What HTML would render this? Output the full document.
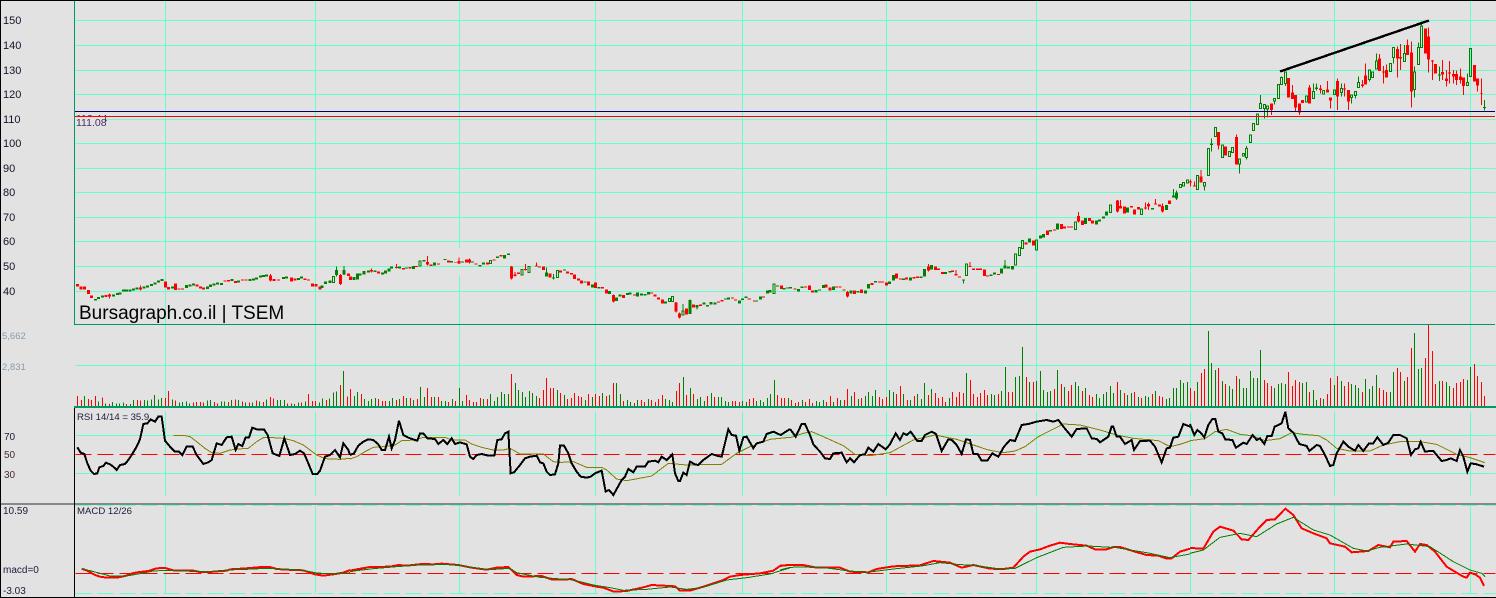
<!DOCTYPE html>
<html><head><meta charset="utf-8"><title>Bursagraph.co.il | TSEM</title>
<style>
html,body{margin:0;padding:0;background:#e2e2e2;width:1496px;height:598px;overflow:hidden}
svg{display:block}
text{font-family:"Liberation Sans",sans-serif;font-size:10px;fill:#1c1c3c}
.p text{font-size:11px;fill:#14142c}
path,polyline{fill:none}
</style></head><body>
<svg width="1496" height="598" viewBox="0 0 1496 598" shape-rendering="crispEdges" xmlns="http://www.w3.org/2000/svg">
<rect width="1496" height="598" fill="#e2e2e2"/>
<!-- grid -->
<g transform="translate(.5 .5)">
<path stroke="#66ffcc" d="M165 0V324M315 0V324M459 0V248M459 275V324M595 0V324M742 0V324M886 0V324M1036 0V324M1190 0V324M1334 0V324M1470 0V324M75 20H1495M75 45H1495M75 70H1495M75 94H1495M75 119H1495M75 143H1495M75 168H1495M75 192H1495M75 217H1495M75 241H1495M75 266H1495M75 291H1495"/>
<path stroke="#66ffcc" d="M165 325V406M315 325V406M459 325V406M595 325V406M742 325V406M886 325V406M1036 325V406M1190 325V406M1334 325V406M1470 325V406M75 365H1495"/>
<path stroke="#66ffcc" d="M165 411V495M315 411V495M459 411V495M595 411V495M742 411V495M886 411V495M1036 411V495M1190 411V495M1334 411V495M1470 411V495M75 435H1495M75 473H1495"/>
<path stroke="#66ffcc" d="M165 505V593M315 505V593M459 505V593M595 505V593M742 505V593M886 505V593M1036 505V593M1190 505V593M1334 505V593M1470 505V593"/>
<path stroke="#66ffcc" stroke-dasharray="16 6" d="M75 505H1495M75 593H1495"/>
<path stroke="#ff0000" stroke-dasharray="16 6" d="M75 454H1495M75 573H1495"/>
</g>
<!-- labels -->
<g class="p"><text x="3" y="24">150</text><text x="3" y="49">140</text><text x="3" y="74">130</text><text x="3" y="98">120</text><text x="3" y="123">110</text><text x="3" y="147">100</text><text x="3" y="172">90</text><text x="3" y="196">80</text><text x="3" y="221">70</text><text x="3" y="245">60</text><text x="3" y="270">50</text><text x="3" y="295">40</text></g>
<text x="76" y="122" style="font-size:10.5px;fill:#443355">112.44</text>
<rect x="75" y="117" width="30" height="11" fill="#e2e2e2"/>
<text x="76" y="126" style="font-size:10.5px;fill:#443366">111.08</text>
<text x="2" y="339" style="font-size:9.5px;fill:#8a9bab">5,662</text>
<text x="2" y="370" style="font-size:9.5px;fill:#8a9bab">2,831</text>
<text x="79" y="319" style="font-size:19px;fill:#000">Bursagraph.co.il | TSEM</text>
<text x="77" y="420" style="font-size:9.6px">RSI 14/14 = 35.9</text>
<text x="4" y="440">70</text><text x="4" y="458" style="fill:#4a2a3a">50</text><text x="4" y="478" style="fill:#4a2a3a">30</text>
<text x="77" y="514" style="font-size:9.6px">MACD 12/26</text>
<text x="3" y="514">10.59</text><text x="3" y="573">macd=0</text><text x="3" y="594">-3.03</text>

<!-- candles zone A -->
<g transform="translate(0 270) scale(.333333)">
<path stroke="#ff0000" stroke-width="9" d="M232 42V50M243 50V58M253 50V58M265 60V72M275 76V84M318 75V81M329 74V80M421 53V59M497 34V52M506 51V59M527 40V60M537 55V59M548 55V59M591 44V50M601 49V55M611 53V59M675 31V35M686 30V34M707 33V39M728 28V32M738 28V32M811 16V32M822 27V33M835 28V32M875 22V35M885 25V31M915 26V30M925 28V32M938 41V49M948 42V50M960 50V58M1022 15V42M1045 10V18"/>
<path stroke="#008000" stroke-width="9" d="M286 87V92M296 81V87M307 76V82M340 73V79M352 69V75M360 67V73M370 59V65M380 59V65M390 59V65M400 55V61M411 53V59M432 49V55M443 47V53M454 42V48M465 37V43M476 32V38M486 27V33M517 50V56M559 45V54M570 43V49M580 41V47M622 50V57M632 44V51M642 40V46M653 37V43M664 39V45M696 27V33M716 31V37M750 27V33M760 25V31M770 22V28M781 17V23M791 15V21M800 14V20M850 21V27M860 19V25M895 24V30M905 20V26M966 46V54M977 34V42M990 31V39"/>
<path stroke="#008000" stroke-width="3" fill="none" d="M998 20h6V38h-6zM1007 2h6V14h-6zM1029 2h6V12h-6z"/>
<path stroke="#ff0000" stroke-width="3" d="M421 46V62M329 70V85M811 12V34M1022 12V45"/>
<path stroke="#008000" stroke-width="3" d="M1010 -10V20M1032 -12V15"/>
</g>
<!-- candles zone B -->
<g transform="translate(350 230) scale(.333333)">
<path stroke="#ff0000" stroke-width="9" d="M2 140V150M65 120V124M85 125V130M140 111V114M160 114V118M180 111V116M200 108V111M232 96V103M243 104V108M265 100V104M295 91V97M316 96V98M327 93V100M350 88V98M358 88V98M378 101V104M412 98V104M432 88V92M453 75V79M484 110V145M495 134V138M505 128V132M526 117V120M560 106V110M568 110V113M580 110V120M600 131V142M631 121V128M653 125V131M664 129V134M674 133V147M685 145V152M695 152V161M715 155V167M736 158V174M757 171V175M769 178V191M790 195V214M820 195V204M853 193V197M905 187V190M915 193V200M925 202V208M937 208V220M978 218V245M989 250V262M1009 235V253M1030 224V232M1051 224V228M1105 214V218M1116 210V214M1147 202V205M1157 208V212M1197 205V208"/>
<path stroke="#008000" stroke-width="9" d="M12 141V150M22 130V148M30 131V137M42 123V133M55 122V127M75 122V126M97 127V133M107 122V130M117 115V125M125 110V116M148 110V116M170 113V116M190 108V117M222 90V94M253 98V107M285 87V90M305 93V97M337 94V98M367 95V98M390 105V109M400 98V103M442 80V84M463 75V85M475 71V75M590 128V140M611 142V146M643 118V122M705 154V158M727 163V172M747 171V175M778 183V192M800 203V213M810 193V200M832 189V195M840 188V193M862 187V200M875 191V196M885 192V196M895 186V194M947 214V220M1041 225V232M1062 218V224M1072 225V230M1083 216V223M1095 217V223M1127 205V209M1136 203V208M1168 212V220M1178 206V210M1188 200V204"/>
<path stroke="#008000" stroke-width="3" d="M207 93h6V108h-6zM418 92h6V100h-6zM513 118h6V135h-6zM534 110h6V127h-6zM619 121h6V142h-6zM955 205h6V214h-6zM965 200h6V215h-6zM996 243h6V255h-6zM1017 212h6V250h-6z"/>
<path stroke="#ff0000" stroke-width="3" d="M232 78V106M327 82V102M526 102V122M484 108V148M495 126V140M65 116V128M140 102V116M560 98V110M358 86V100M978 216V248M989 248V265M790 193V218"/>
<path stroke="#008000" stroke-width="3" d="M590 113V130M1020 209V252M1041 232V238M999 222V245M611 132V148"/>
</g>
<!-- candles zone C -->
<g transform="translate(740 170) scale(.333333)">
<path stroke="#ff0000" stroke-width="9" d="M28 385V388M43 392V395M70 379V383M124 347V357M165 355V358M196 349V352M208 347V360M217 362V368M258 344V353M270 353V362M290 350V353M300 350V353M312 358V361M322 366V379M343 362V372M364 358V369M396 339V345M418 334V338M428 335V338M440 338V347M469 310V326M481 326V329M500 322V328M522 321V325M532 320V324M565 290V302M586 290V300M595 296V300M607 306V312M637 301V306M648 312V316M658 320V323M690 288V291M700 296V300M712 296V300M722 296V300M733 298V318M743 316V320M775 312V315M858 218V224M880 212V226M922 182V195M943 178V182M964 162V177M973 170V175M985 170V173M994 170V173M1016 138V155M1027 152V165M1048 144V153M1057 152V160M1132 92V125M1141 108V116M1153 110V130M1174 108V112M1183 118V134M1195 111V119M1217 112V115M1225 102V110M1246 101V104M1258 103V110M1268 108V124M1288 92V102"/>
<path stroke="#008000" stroke-width="9" d="M50 391V395M62 380V388M82 361V370M90 360V367M112 346V350M132 354V358M142 352V356M152 351V355M175 357V364M186 350V354M228 360V367M238 358V362M250 345V354M280 350V360M333 362V370M354 363V367M376 361V370M385 342V356M406 333V337M448 335V342M460 315V331M490 326V330M511 322V331M543 320V324M553 297V320M574 285V298M617 306V312M630 303V308M670 328V332M753 313V318M763 307V314M785 295V310M795 287V295M806 290V296M817 288V298M868 206V218M901 197V205M910 192V202M932 180V185M953 160V178M1036 144V162M1069 151V163M1079 148V155M1090 139V145M1100 124V136M1162 112V128M1237 114V118M1279 105V120M1300 76V82M1310 68V85"/>
<path stroke="#008000" stroke-width="3" d="M99 342h6V370h-6zM677 282h6V317h-6zM824 252h6V285h-6zM835 232h6V257h-6zM845 212h6V235h-6zM886 210h6V240h-6zM1003 156h6V178h-6zM1108 105h6V128h-6zM1202 117h6V134h-6z"/>
<path stroke="#ff0000" stroke-width="3" d="M322 363V382M565 282V305M690 276V291M648 300V316M1016 126V158M1132 90V128M1141 90V112M1217 97V118M1246 87V104M1268 100V128M1225 98V120"/>
<path stroke="#008000" stroke-width="3" d="M795 270V295M670 330V340M1300 57V82M1310 62V90"/>
</g>
<!-- candles zone D -->
<g transform="translate(1180.1667 0) scale(.333333)">
<path stroke="#ff0000" stroke-width="9" d="M31 544V548M43 557V560M63 530V548M115 396V437M136 440V466M169 411V494M274 310V330M325 234V292M337 277V297M346 285V323M358 310V337M367 300V309M388 262V310M421 266V270M442 268V278M451 293V302M472 243V290M493 266V269M505 270V305M547 254V258M556 226V254M598 175V213M610 214V218M619 210V233M652 147V176M661 171V175M682 135V165M694 157V275M736 85V160M745 110V178M757 182V185M766 192V220M787 216V224M799 235V243M808 218V220M820 222V230M829 222V240M841 230V240M850 232V258M883 195V245M892 236V256M904 279V281"/>
<path stroke="#ff0000" stroke-width="3" d="M31 538V560M43 545V560M63 510V530M115 396V449M169 403V494M274 330V345M325 234V292M337 255V297M346 285V333M358 337V345M388 255V310M421 255V280M442 243V278M451 302V325M472 235V330M493 250V290M505 305V330M547 240V262M556 190V226M598 162V213M610 198V250M619 193V233M652 140V233M661 132V210M682 118V135M694 125V323M745 83V218M757 180V240M787 180V240M799 210V260M808 183V250M820 210V250M829 212V255M841 205V250M850 258V285M892 256V275M904 235V315"/>
<path stroke="#008000" stroke-width="3" d="M-2 553h6V562h-6zM7 548h6V558h-6zM19 540h6V549h-6zM49 527h6V568h-6zM70 548h6V558h-6zM82 445h6V526h-6zM103 382h6V410h-6zM124 435h6V472h-6zM145 455h6V470h-6zM154 442h6V458h-6zM175 477h6V492h-6zM187 460h6V468h-6zM196 445h6V472h-6zM208 405h6V427h-6zM217 370h6V392h-6zM229 342h6V373h-6zM238 310h6V325h-6zM250 314h6V325h-6zM259 318h6V327h-6zM280 295h6V303h-6zM292 253h6V295h-6zM301 233h6V253h-6zM313 216h6V250h-6zM376 288h6V306h-6zM397 274h6V296h-6zM427 272h6V282h-6zM460 270h6V284h-6zM481 265h6V277h-6zM511 285h6V293h-6zM523 275h6V287h-6zM532 247h6V263h-6zM565 210h6V238h-6zM574 216h6V232h-6zM586 183h6V207h-6zM628 190h6V215h-6zM637 143h6V173h-6zM670 160h6V185h-6zM700 216h6V268h-6zM712 142h6V193h-6zM721 78h6V142h-6zM859 247h6V256h-6zM868 145h6V230h-6z"/>
<path stroke="#008000" stroke-width="3" d="M73 558V572M94 415V455M241 285V310M253 325V355M262 327V352M178 492V520M199 438V445M199 472V478M241 325V327M283 303V313M304 233V230M316 250V258M400 250V274M409 250V272M409 264V268M484 250V265M484 277V290M514 293V310M526 287V295M535 230V247M568 238V245M589 160V183M640 173V190M673 135V160M703 200V216M703 268V293M715 128V142M724 65V78M778 200V243M862 220V247M862 256V258M913 300V332M908 323H918"/>
<path stroke="#008000" stroke-width="9" d="M94 431V435M409 263V267M778 224V227"/>
</g>
<!-- trend line -->
<path stroke="#000" stroke-width="2.4" d="M1280 71.5L1429 20.5"/>
<!-- support lines -->
<path stroke="#000060" d="M75 111.5H1495"/>
<path stroke="#ff0000" d="M75 116.5H1495"/>

<!-- volume -->
<g transform="translate(.1667 270) scale(.333333)">
<path stroke="#ff0000" stroke-width="3" d="M232 378V410M244 390V410M265 387V410M274 390V410M286 378V410M307 383V410M328 402V410M379 402V410M412 390V410M421 392V410M496 384V410M505 363V410M526 392V410M580 398V410M589 396V410M601 396V410M610 398V410M643 396V410M652 400V410M685 396V410M706 388V410M727 395V410M748 398V410M769 392V410M790 396V410M811 381V410M820 385V410M862 400V410M874 400V410M904 398V410M925 372V410M937 393V410M946 393V410M979 390V410M1021 345V410M1042 380V410"/>
<path stroke="#008000" stroke-width="3" d="M253 378V410M295 395V410M316 400V410M337 396V410M349 400V410M358 400V410M370 397V410M391 402V410M400 390V410M433 390V410M442 392V410M454 388V410M463 375V410M475 388V410M484 384V410M517 388V410M538 398V410M547 396V410M559 395V410M568 400V410M622 392V410M631 390V410M664 395V410M673 394V410M694 390V410M715 390V410M736 398V410M757 398V410M778 394V410M799 388V410M832 390V410M841 390V410M853 390V410M883 402V410M895 397V410M916 395V410M958 397V410M967 385V410M988 386V410M1000 367V410M1009 364V410M1030 303V410"/>
</g>
<g transform="translate(340.1667 325) scale(.333333)">
<path stroke="#ff0000" stroke-width="3" d="M31 192V245M64 207V245M115 222V245M127 228V245M136 228V245M169 225V245M190 213V245M211 219V245M232 222V245M262 189V245M274 216V245M295 216V245M325 231V245M346 228V245M379 210V245M388 225V245M400 231V245M409 231V245M421 219V245M442 222V245M514 147V245M598 219V245M610 195V245M619 159V245M631 189V245M640 189V245M661 204V245M682 222V245M694 219V245M703 204V245M715 213V245M724 216V245M745 207V245M766 207V245M778 213V245M799 213V245M820 174V245M850 228V245M883 234V245M904 225V245M913 231V245M934 225V245M946 231V245M955 222V245M967 210V245M1009 198V245M1018 174V245M1039 210V245M1060 207V245M1102 213V245M1123 216V245M1177 228V245M1186 228V245M1198 231V245M1228 222V245M1240 219V245M1312 210V245M1324 219V245M1333 219V245"/>
<path stroke="#008000" stroke-width="3" d="M43 213V245M52 201V245M73 222V245M85 228V245M94 222V245M106 219V245M148 228V245M157 219V245M178 222V245M199 219V245M220 225V245M241 186V245M253 216V245M283 216V245M304 228V245M316 228V245M337 222V245M358 189V245M367 228V245M430 222V245M451 207V245M463 228V245M472 216V245M484 201V245M493 207V245M505 207V245M526 174V245M535 195V245M547 201V245M556 216V245M568 198V245M577 204V245M589 213V245M652 195V245M673 210V245M736 225V245M757 216V245M787 204V245M808 210V245M829 174V245M841 207V245M862 225V245M871 231V245M892 225V245M925 222V245M976 222V245M988 225V245M997 231V245M1030 156V245M1051 189V245M1072 222V245M1081 216V245M1093 228V245M1114 204V245M1135 216V245M1144 216V245M1156 228V245M1165 231V245M1207 228V245M1219 231V245M1249 228V245M1261 225V245M1270 231V245M1282 219V245M1291 207V245M1303 165V245M1345 219V245"/>
</g>
<g transform="translate(780.1667 325) scale(.333333)">
<path stroke="#ff0000" stroke-width="3" d="M34 225V245M46 234V245M55 231V245M76 231V245M88 222V245M97 234V245M139 231V245M151 213V245M172 219V245M193 225V245M202 192V245M223 201V245M244 219V245M298 216V245M307 222V245M319 216V245M349 207V245M361 183V245M382 225V245M403 213V245M445 210V245M466 204V245M475 219V245M487 216V245M496 231V245M517 201V245M529 216V245M538 201V245M550 204V245M571 165V245M580 207V245M592 216V245M601 204V245M613 195V245M622 210V245M655 207V245M685 201V245M697 201V245M739 156V245M760 171V245M823 192V245M844 177V245M865 198V245M874 180V245M907 198V245M928 210V245M937 216V245M1012 171V245M1033 204V245M1063 201V245M1084 219V245M1117 207V245M1138 213V245M1147 216V245"/>
<path stroke="#008000" stroke-width="3" d="M67 225V245M109 228V245M118 231V245M130 225V245M160 231V245M181 225V245M214 213V245M235 222V245M256 213V245M265 201V245M277 213V245M286 195V245M328 195V245M340 201V245M370 207V245M391 225V245M412 207V245M424 222V245M433 174V245M454 192V245M508 219V245M559 144V245M634 207V245M643 210V245M664 198V245M676 126V245M706 156V245M718 153V245M727 66V245M748 171V245M769 168V245M781 138V245M790 195V245M802 201V245M811 198V245M832 135V245M853 186V245M886 171V245M895 183V245M916 189V245M949 207V245M958 219V245M970 207V245M979 201V245M991 183V245M1000 204V245M1021 195V245M1042 210V245M1054 204V245M1075 216V245M1096 213V245M1105 216V245M1126 198V245M1159 222V245M1168 219V245M1180 189V245M1189 189V245M1201 165V245M1210 174V245M1222 171V245"/>
</g>
<g transform="translate(1180.1667 320) scale(.333333)">
<path stroke="#ff0000" stroke-width="3" d="M31 204V260M43 213V260M64 159V260M73 147V260M115 144V260M136 192V260M169 168V260M253 180V260M262 189V260M274 198V260M325 156V260M337 198V260M346 180V260M358 186V260M388 216V260M421 234V260M442 222V260M451 174V260M472 168V260M493 198V260M505 186V260M547 216V260M598 204V260M610 210V260M619 216V260M652 144V260M661 156V260M682 171V260M694 84V260M736 114V260M745 15V260M757 93V260M766 192V260M787 183V260M820 204V260M829 189V260M841 186V260M850 177V260M883 132V260M892 168V260M904 186V260M913 228V260"/>
<path stroke="#008000" stroke-width="3" d="M22 186V260M52 186V260M85 33V260M94 129V260M106 150V260M127 183V260M148 198V260M157 207V260M178 177V260M190 204V260M199 204V260M211 153V260M220 174V260M232 174V260M241 90V260M283 204V260M295 192V260M304 189V260M316 192V260M367 189V260M379 186V260M400 210V260M409 240V260M430 237V260M463 195V260M484 183V260M514 192V260M526 195V260M535 204V260M556 177V260M568 207V260M577 198V260M589 165V260M631 216V260M640 156V260M673 183V260M703 39V260M715 147V260M724 144V260M778 183V260M799 186V260M808 198V260M862 180V260M871 141V260"/>
</g>
<!-- panel borders -->
<path stroke="#009966" d="M74.5 0V325M74 324.5H1495"/>
<rect x="74" y="406" width="1422" height="2" fill="#009966"/>
<rect x="0" y="503" width="1496" height="2" fill="#888888"/>
<path stroke="#000" d="M74.5 408V597"/>

<!-- RSI -->
<g transform="translate(0 400) scale(.333333)">
<polyline stroke="#808000" stroke-width="3" points="520,106 550,106 570,110 590,125 615,145 635,158 660,160 690,150 715,147 745,145 770,125 790,113 820,113 850,115 880,122 910,135 930,150 950,165 975,176 1020,178 1050,175"/>
<polyline stroke="#000" stroke-width="6" points="232,142 242,158 253,162 262,190 272,212 282,222 292,220 298,202 310,198 318,188 332,194 342,202 350,210 360,195 375,192 385,180 395,165 410,140 420,118 430,72 442,70 452,58 465,65 475,50 485,50 495,122 510,140 525,155 537,155 547,165 560,140 578,140 590,165 610,192 625,187 635,180 650,130 665,135 680,112 695,110 707,150 715,132 727,138 737,112 747,112 757,83 770,88 780,88 792,88 803,105 818,160 838,168 853,115 870,165 885,162 900,152 912,160 925,190 938,222 952,222 960,212 975,170 990,165 1005,150 1020,172 1030,130 1045,150 1050,165"/>
</g>
<g transform="translate(340 405) scale(.333333)">
<polyline stroke="#808000" stroke-width="3" points="30,162 50,155 75,140 100,127 130,125 165,120 185,107 225,105 250,97 315,97 335,105 375,105 395,117 425,127 460,135 490,135 510,130 540,147 610,147 640,170 665,172 700,170 740,187 785,187 800,195 830,222 860,227 935,213 985,175 1040,180 1145,178 1190,145 1230,125 1290,103 1350,97"/>
<polyline stroke="#000" stroke-width="6" points="30,150 42,145 55,122 70,110 85,103 100,105 115,118 125,135 135,135 147,95 155,130 165,105 177,47 190,90 205,98 225,105 232,107 240,85 250,85 262,100 285,102 295,117 310,105 322,117 335,100 345,117 360,112 380,118 390,155 400,162 410,150 425,147 445,152 463,152 472,105 485,103 495,85 505,80 512,205 522,202 540,180 555,160 570,155 590,152 600,172 610,175 620,200 630,210 645,208 655,175 660,122 672,122 685,145 695,175 710,200 722,215 740,218 752,215 765,205 785,197 797,260 807,255 820,270 845,225 855,215 865,192 880,202 890,185 915,185 925,170 945,167 955,172 965,155 980,165 997,148 1005,205 1015,228 1020,228 1030,203 1040,210 1050,170 1065,178 1075,180 1090,165 1115,147 1130,152 1145,155 1165,73 1175,90 1188,92 1198,137 1210,97 1220,95 1240,130 1250,115 1270,110 1280,87 1300,80 1322,90 1350,72"/>
</g>
<g transform="translate(780 405) scale(.333333)">
<polyline stroke="#808000" stroke-width="3" points="30,98 40,95 70,85 95,80 130,95 190,122 225,148 270,152 330,143 400,105 465,90 530,103 625,135 670,143 705,138 735,125 775,95 850,57 900,60 960,75 1010,90 1060,100 1135,107 1170,125 1200,118 1230,108"/>
<polyline stroke="#000" stroke-width="6" points="30,72 47,95 65,57 75,57 90,90 100,118 120,140 135,160 150,162 160,145 185,143 200,172 210,160 222,172 240,150 255,148 265,128 280,140 295,117 317,133 330,118 347,85 360,105 370,85 380,90 392,80 412,108 425,108 435,90 455,80 468,87 485,138 505,103 515,105 530,120 545,147 558,103 570,105 580,147 593,147 605,167 622,167 637,145 655,155 672,125 690,105 705,108 725,60 745,57 770,50 800,45 820,50 835,45 850,65 875,95 890,72 920,70 935,100 950,102 960,112 985,95 995,65 1000,65 1010,95 1020,95 1035,117 1055,105 1062,135 1080,108 1110,107 1125,125 1145,172 1160,130 1170,128 1180,98 1195,95 1210,57 1230,65"/>
</g>
<g transform="translate(1180 320) scale(.333333)">
<polyline stroke="#808000" stroke-width="3" points="30,362 75,356 105,335 140,328 180,343 215,347 255,362 300,356 335,338 370,343 415,347 440,360 470,385 510,393 570,393 610,375 660,365 720,365 770,373 830,403 870,413 915,428"/>
<polyline stroke="#000" stroke-width="6" points="30,312 35,325 43,345 52,330 62,338 73,352 85,315 97,297 106,297 115,335 127,340 136,358 157,360 168,383 190,368 200,372 218,345 230,360 240,355 253,372 262,348 275,348 284,320 305,310 316,275 325,325 340,338 358,372 380,378 388,393 410,375 420,378 435,405 450,438 460,435 470,400 490,365 505,380 525,392 535,375 550,393 567,370 580,370 592,352 610,375 625,368 640,345 660,345 680,355 693,405 705,388 715,385 722,365 735,395 750,393 760,393 785,423 800,420 812,415 830,423 840,390 850,410 862,455 872,430 890,433 912,440"/>
</g>

<!-- MACD -->
<g transform="translate(0 400) scale(.333333)">
<polyline stroke="#ff0000" stroke-width="6" points="245,506 262,512 285,525 300,530 320,533 350,533 375,528 400,519 420,516 445,513 470,505 495,504 520,511 545,512 575,511 600,516 630,516 650,514 680,512 690,508 725,506 750,504 785,501 810,501 830,507 860,509 910,511 945,523 970,527 1000,523 1030,518 1050,510"/>
<polyline stroke="#008000" stroke-width="3" points="245,507 270,512 300,520 330,528 380,528 420,521 460,513 500,511 530,513 580,514 630,516 680,510 740,508 800,505 860,508 910,511 950,519 1000,522 1050,518"/>
</g>
<g transform="translate(340 405) scale(.333333)">
<polyline stroke="#ff0000" stroke-width="6" points="30,497 50,493 90,486 150,485 175,480 200,482 245,477 280,478 305,476 355,480 395,488 440,494 470,488 505,486 530,510 550,515 605,513 635,523 670,524 695,522 730,537 770,545 790,548 822,560 860,558 910,547 935,540 1005,544 1020,557 1050,557 1100,542 1150,525 1170,515 1200,510 1260,505 1300,497 1320,483 1345,480 1350,480"/>
<polyline stroke="#008000" stroke-width="3" points="30,500 50,497 100,491 170,485 240,480 340,478 400,488 450,494 510,490 530,503 600,517 650,521 700,525 760,540 810,548 850,556 920,553 990,546 1040,553 1090,547 1160,525 1220,518 1290,507 1345,490 1350,489"/>
</g>
<g transform="translate(780 405) scale(.333333)">
<polyline stroke="#ff0000" stroke-width="6" points="0,481 70,480 90,484 110,488 180,488 210,500 265,502 290,492 340,484 420,481 460,468 510,473 545,488 580,480 630,491 670,492 700,488 730,455 750,440 780,433 810,422 840,413 870,417 920,422 945,433 980,433 1000,426 1020,426 1065,440 1100,450 1135,452 1160,461 1175,460 1200,440 1230,431"/>
<polyline stroke="#008000" stroke-width="3" points="0,495 30,487 70,486 140,489 200,497 260,502 340,492 425,483 480,473 530,478 590,482 660,492 705,490 770,458 850,427 925,423 1010,428 1100,443 1170,458 1230,447"/>
</g>
<g transform="translate(1180 320) scale(.333333)">
<polyline stroke="#ff0000" stroke-width="6" points="30,684 70,686 100,635 120,620 160,632 185,658 205,660 240,620 260,600 285,598 316,566 340,585 365,625 400,640 440,655 450,670 495,680 515,697 565,693 595,675 630,682 640,665 680,663 705,695 720,672 740,675 765,695 800,740 850,770 860,773 870,758 885,763 900,773 912,798"/>
<polyline stroke="#008000" stroke-width="3" points="30,700 70,690 120,652 180,640 230,650 290,612 340,592 400,630 450,645 520,685 560,693 600,682 680,672 750,680 820,725 870,750 905,760 915,770"/>
</g>

<!-- outer frame -->
<path stroke="#000" d="M0 .5H1496M.5 0V598M0 597.5H1496"/>
</svg>
</body></html>
